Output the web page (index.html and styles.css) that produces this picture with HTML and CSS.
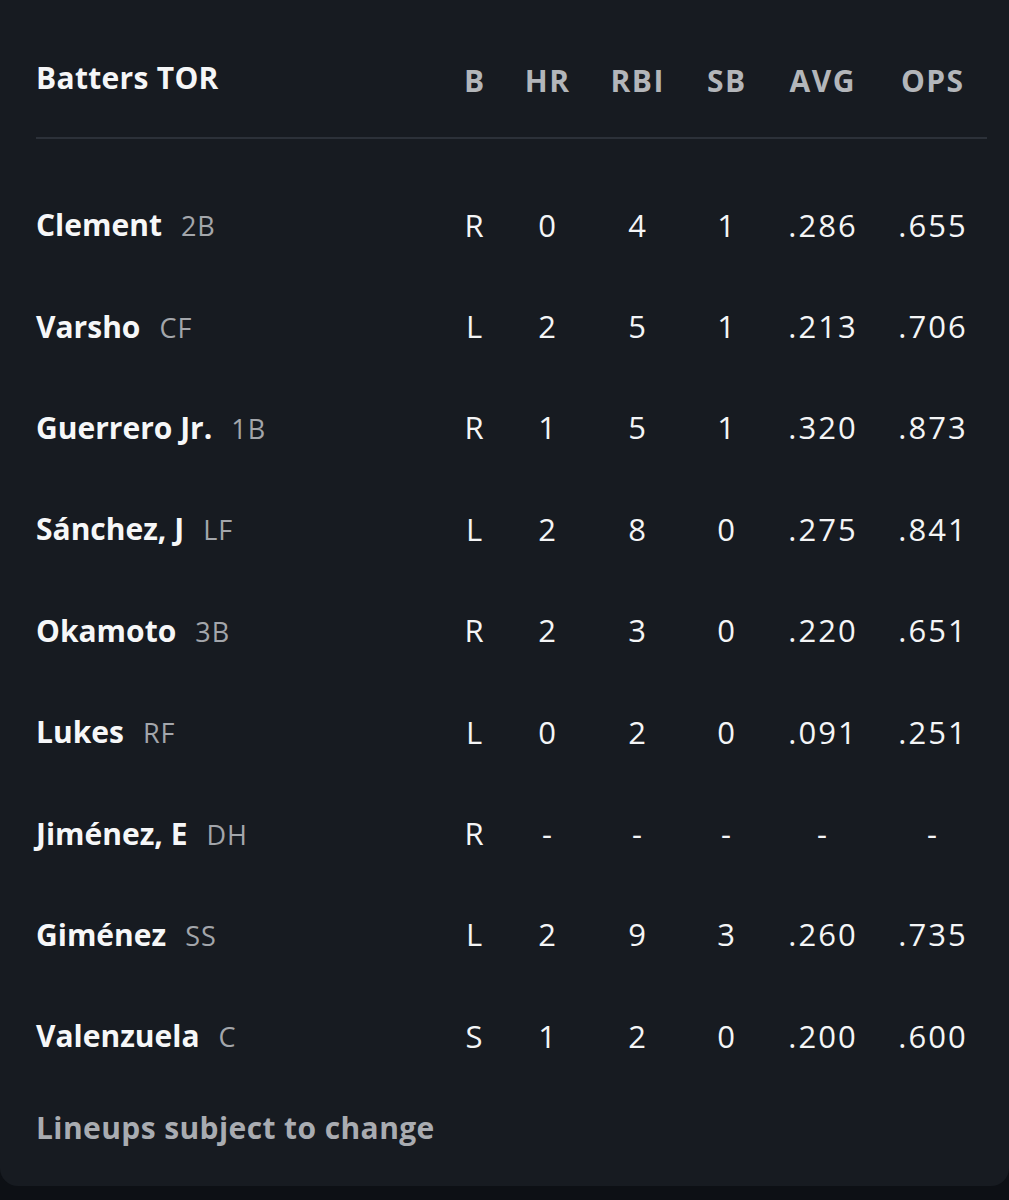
FILE: index.html
```html
<!DOCTYPE html>
<html>
<head>
<meta charset="utf-8">
<link rel="stylesheet" href="styles.css">
</head>
<body>
<div class="card">
  <div class="grid head">
    <div class="title">Batters TOR</div>
    <div class="c">B</div><div class="c">HR</div><div class="c">RBI</div><div class="c">SB</div><div class="c">AVG</div><div class="c">OPS</div>
  </div>
  <div class="divider"></div>
  <div class="rows">
    <div class="grid row"><div class="name">Clement<span class="pos">2B</span></div><div class="c">R</div><div class="c">0</div><div class="c">4</div><div class="c">1</div><div class="c">.286</div><div class="c">.655</div></div>
    <div class="grid row"><div class="name">Varsho<span class="pos">CF</span></div><div class="c">L</div><div class="c">2</div><div class="c">5</div><div class="c">1</div><div class="c">.213</div><div class="c">.706</div></div>
    <div class="grid row"><div class="name">Guerrero Jr.<span class="pos">1B</span></div><div class="c">R</div><div class="c">1</div><div class="c">5</div><div class="c">1</div><div class="c">.320</div><div class="c">.873</div></div>
    <div class="grid row"><div class="name">Sánchez, J<span class="pos">LF</span></div><div class="c">L</div><div class="c">2</div><div class="c">8</div><div class="c">0</div><div class="c">.275</div><div class="c">.841</div></div>
    <div class="grid row"><div class="name">Okamoto<span class="pos">3B</span></div><div class="c">R</div><div class="c">2</div><div class="c">3</div><div class="c">0</div><div class="c">.220</div><div class="c">.651</div></div>
    <div class="grid row"><div class="name">Lukes<span class="pos">RF</span></div><div class="c">L</div><div class="c">0</div><div class="c">2</div><div class="c">0</div><div class="c">.091</div><div class="c">.251</div></div>
    <div class="grid row"><div class="name">Jiménez, E<span class="pos">DH</span></div><div class="c">R</div><div class="c">-</div><div class="c">-</div><div class="c">-</div><div class="c">-</div><div class="c">-</div></div>
    <div class="grid row"><div class="name">Giménez<span class="pos">SS</span></div><div class="c">L</div><div class="c">2</div><div class="c">9</div><div class="c">3</div><div class="c">.260</div><div class="c">.735</div></div>
    <div class="grid row"><div class="name">Valenzuela<span class="pos">C</span></div><div class="c">S</div><div class="c">1</div><div class="c">2</div><div class="c">0</div><div class="c">.200</div><div class="c">.600</div></div>
  </div>
  <div class="footer">Lineups subject to change</div>
</div>
</body>
</html>
```
FILE: styles.css
```css
html, body {
  margin: 0;
  padding: 0;
  background: #0d1015;
}
body {
  width: 1009px;
  height: 1200px;
  font-family: "Open Sans", "Liberation Sans", sans-serif;
  color: #f4f5f6;
}
.card {
  background: #171b21;
  height: 1186px;
  box-sizing: border-box;
  border-radius: 0 0 18px 18px;
  padding: 0 22px 0 36px;
}
.grid {
  display: grid;
  grid-template-columns: 407px 62px 84px 96px 82px 110px 110px;
  align-items: center;
}
.head {
  height: 137px;
  padding-top: 24px;
  box-sizing: border-box;
}
.title {
  font-weight: 700;
  font-size: 30px;
  letter-spacing: 0.3px;
  color: #f5f6f7;
  margin-top: -6px;
}
.head .c {
  font-weight: 700;
  font-size: 30px;
  letter-spacing: 1.5px;
  padding-left: 1.5px;
  color: #b3b6ba;
}
.c {
  text-align: center;
  font-size: 31px;
  letter-spacing: 2px;
  padding-left: 2px;
}
.divider {
  height: 2px;
  background: #2c3139;
}
.rows {
  padding-top: 35px;
}
.row {
  height: 101.4px;
}
.name {
  font-weight: 700;
  font-size: 30px;
  color: #f6f7f8;
}
.pos {
  font-weight: 400;
  font-size: 27px;
  letter-spacing: 1px;
  color: #a3a6ab;
  margin-left: 19px;
}
.footer {
  font-weight: 700;
  font-size: 30px;
  letter-spacing: 0.4px;
  color: #a9acb1;
  padding-top: 20px;
}
```
